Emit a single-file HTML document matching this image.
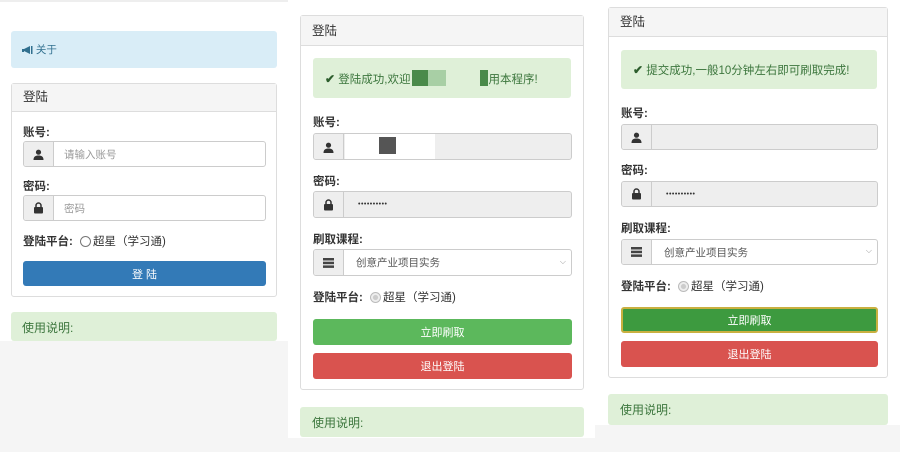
<!DOCTYPE html>
<html><head><meta charset="utf-8"><style>
*{box-sizing:border-box;margin:0;padding:0}
body{width:900px;height:452px;position:relative;overflow:hidden;background:#fff;font-family:"Liberation Sans","Noto Sans CJK SC",sans-serif;color:#333;font-size:11px}
.a{position:absolute}
.panel{position:absolute;border:1px solid #ddd;border-radius:3px;background:#fff}
.ph{position:absolute;left:0;right:0;top:0;background:#f5f5f5;border-bottom:1px solid #ddd;font-size:12.5px;padding-left:11px;color:#333}
.lbl{position:absolute;font-weight:bold;font-size:11.5px;color:#333}
.ig{position:absolute;border:1px solid #ccc;border-radius:3px;background:#fff;overflow:hidden}
.ig.dis{background:#eee}
.ad{position:absolute;left:0;top:0;bottom:0;width:30px;background:#eee;border-right:1px solid #ccc}
.txt{position:absolute;left:40px;top:0;bottom:0;display:flex;align-items:center;font-size:10.5px}
.btn{position:absolute;border-radius:3px;color:#fff;font-size:11px;display:flex;align-items:center;justify-content:center}
.alert{position:absolute;border-radius:3px}
.green{background:#dff0d8;color:#3c763d}
.chk{font-weight:bold;color:#2d5e2d;font-size:12px}
.dots{position:absolute;left:44px;top:0;bottom:0;display:flex;align-items:center;font-size:7px;letter-spacing:0.5px;color:#333}
.radio{display:inline-block;width:11px;height:11px;border:1px solid #777;border-radius:50%;vertical-align:-2px;margin:0 2px 0 4px;background:#fff}
.radio.g{border-color:#bbb;background:radial-gradient(circle,#ccc 35%,#eee 45%)}
</style></head><body>
<div class="a" style="left:0;top:0;width:288px;height:2px;background:#eee"></div>
<div class="a" style="left:0;top:341px;width:288px;height:111px;background:#f5f5f5"></div>
<div class="a" style="left:288px;top:438px;width:307px;height:14px;background:#f5f5f5"></div>
<div class="a" style="left:595px;top:425px;width:305px;height:27px;background:#f5f5f5"></div>

<!-- Panel 1 -->
<div class="alert" style="left:11px;top:31px;width:266px;height:37px;background:#d9edf7;color:#31708f;font-size:10.5px;padding:11px 0 0 11px">
<svg width="11" height="8" viewBox="0 0 11 8" style="vertical-align:-1px"><path d="M0 3h2v3H0zM2 3l6-3v8L2 5z M9 0h1.5v8H9z" fill="#31708f"/></svg> 关于</div>
<div class="panel" style="left:11px;top:83px;width:266px;height:214px">
<div class="ph" style="height:28px;line-height:27px">登陆</div>
<div class="lbl" style="left:11px;top:40px">账号:</div>
<div class="ig" style="left:11px;top:57px;width:243px;height:26px"><div class="ad"><svg class="a" style="left:9px;top:7px" width="11" height="11" viewBox="0 0 11 11"><circle cx="5.5" cy="3.2" r="2.6" fill="#333"/><path d="M0.5 11c0-3.5 2-4.5 5-4.5s5 1 5 4.5z" fill="#333"/></svg></div><div class="txt" style="color:#999">请输入账号</div></div>
<div class="lbl" style="left:11px;top:94px">密码:</div>
<div class="ig" style="left:11px;top:111px;width:243px;height:26px"><div class="ad"><svg class="a" style="left:9px;top:6px" width="11" height="12" viewBox="0 0 11 12"><path d="M3 5V3.5a2.5 2.5 0 0 1 5 0V5" stroke="#333" stroke-width="1.5" fill="none"/><rect x="1" y="5" width="9" height="6.5" rx="1" fill="#333"/></svg></div><div class="txt" style="color:#999">密码</div></div>
<div class="lbl" style="left:11px;top:149px">登陆平台: <span style="font-weight:normal"><span class="radio"></span>超星（学习通)</span></div>
<div class="btn" style="left:11px;top:177px;width:243px;height:25px;background:#337ab7">登 陆</div>
</div>
<div class="alert green" style="left:11px;top:312px;width:266px;height:29px;font-size:12px;padding:7px 0 0 11px">使用说明:</div>

<!-- Panel 2 -->
<div class="panel" style="left:300px;top:15px;width:284px;height:375px">
<div class="ph" style="height:30px;line-height:30px">登陆</div>
<div class="alert green" style="left:12px;top:42px;width:258px;height:40px;font-size:11.5px;padding:12px 0 0 12px"><span class="chk">✔</span> 登陆成功,欢迎<span style="display:inline-block;width:16px;height:16px;background:#4a8a4a;vertical-align:-3px;margin-left:2px"></span><span style="display:inline-block;width:18px;height:16px;background:#a8cfa5;vertical-align:-3px"></span><span style="display:inline-block;width:34px"></span><span style="display:inline-block;width:8px;height:16px;background:#4a8a4a;vertical-align:-3px"></span>用本程序!</div>
<div class="lbl" style="left:12px;top:98px">账号:</div>
<div class="ig dis" style="left:12px;top:117px;width:259px;height:27px"><div class="ad"><svg class="a" style="left:9px;top:8px" width="11" height="11" viewBox="0 0 11 11"><circle cx="5.5" cy="3.2" r="2.6" fill="#333"/><path d="M0.5 11c0-3.5 2-4.5 5-4.5s5 1 5 4.5z" fill="#333"/></svg></div><div class="a" style="left:31px;top:0;width:90px;height:27px;background:#fff"></div><div class="a" style="left:65px;top:3px;width:17px;height:17px;background:#555"></div></div>
<div class="lbl" style="left:12px;top:157px">密码:</div>
<div class="ig dis" style="left:12px;top:175px;width:259px;height:27px"><div class="ad"><svg class="a" style="left:9px;top:7px" width="11" height="12" viewBox="0 0 11 12"><path d="M3 5V3.5a2.5 2.5 0 0 1 5 0V5" stroke="#333" stroke-width="1.5" fill="none"/><rect x="1" y="5" width="9" height="6.5" rx="1" fill="#333"/></svg></div><div class="dots">••••••••••</div></div>
<div class="lbl" style="left:12px;top:215px">刷取课程:</div>
<div class="ig" style="left:12px;top:233px;width:259px;height:27px"><div class="ad"><svg class="a" style="left:9px;top:8px" width="11" height="10" viewBox="0 0 11 10"><rect y="0" width="11" height="2.5" fill="#444"/><rect y="3.7" width="11" height="2.5" fill="#444"/><rect y="7.4" width="11" height="2.5" fill="#444"/></svg></div><div class="txt" style="left:42px;color:#555">创意产业项目实务</div><div class="a" style="right:5px;top:7px;color:#999;font-size:8px">⌵</div></div>
<div class="lbl" style="left:12px;top:273px">登陆平台: <span style="font-weight:normal"><span class="radio g"></span>超星（学习通)</span></div>
<div class="btn" style="left:12px;top:303px;width:259px;height:26px;background:#5cb85c">立即刷取</div>
<div class="btn" style="left:12px;top:337px;width:259px;height:26px;background:#d9534f">退出登陆</div>
</div>
<div class="alert green" style="left:300px;top:407px;width:284px;height:30px;font-size:12px;padding:7px 0 0 12px">使用说明:</div>

<!-- Panel 3 -->
<div class="panel" style="left:608px;top:7px;width:280px;height:371px">
<div class="ph" style="height:29px;line-height:28px">登陆</div>
<div class="alert green" style="left:12px;top:42px;width:256px;height:39px;font-size:11.5px;padding:12px 0 0 12px"><span class="chk">✔</span> 提交成功,一般10分钟左右即可刷取完成!</div>
<div class="lbl" style="left:12px;top:97px">账号:</div>
<div class="ig dis" style="left:12px;top:116px;width:257px;height:26px"><div class="ad"><svg class="a" style="left:9px;top:7px" width="11" height="11" viewBox="0 0 11 11"><circle cx="5.5" cy="3.2" r="2.6" fill="#333"/><path d="M0.5 11c0-3.5 2-4.5 5-4.5s5 1 5 4.5z" fill="#333"/></svg></div></div>
<div class="lbl" style="left:12px;top:154px">密码:</div>
<div class="ig dis" style="left:12px;top:173px;width:257px;height:26px"><div class="ad"><svg class="a" style="left:9px;top:6px" width="11" height="12" viewBox="0 0 11 12"><path d="M3 5V3.5a2.5 2.5 0 0 1 5 0V5" stroke="#333" stroke-width="1.5" fill="none"/><rect x="1" y="5" width="9" height="6.5" rx="1" fill="#333"/></svg></div><div class="dots">••••••••••</div></div>
<div class="lbl" style="left:12px;top:212px">刷取课程:</div>
<div class="ig" style="left:12px;top:231px;width:257px;height:26px"><div class="ad"><svg class="a" style="left:9px;top:7px" width="11" height="10" viewBox="0 0 11 10"><rect y="0" width="11" height="2.5" fill="#444"/><rect y="3.7" width="11" height="2.5" fill="#444"/><rect y="7.4" width="11" height="2.5" fill="#444"/></svg></div><div class="txt" style="left:42px;color:#555">创意产业项目实务</div><div class="a" style="right:5px;top:6px;color:#999;font-size:8px">⌵</div></div>
<div class="lbl" style="left:12px;top:270px">登陆平台: <span style="font-weight:normal"><span class="radio g"></span>超星（学习通)</span></div>
<div class="btn" style="left:12px;top:299px;width:257px;height:26px;background:#3d9a3f;border:2px solid #c9b040">立即刷取</div>
<div class="btn" style="left:12px;top:333px;width:257px;height:26px;background:#d9534f">退出登陆</div>
</div>
<div class="alert green" style="left:608px;top:394px;width:280px;height:31px;font-size:12px;padding:7px 0 0 12px">使用说明:</div>
</body></html>
